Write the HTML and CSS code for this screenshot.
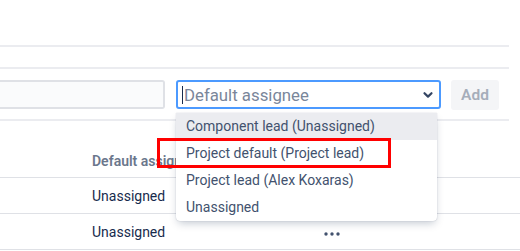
FILE: index.html
```html
<!DOCTYPE html>
<html>
<head>
<meta charset="utf-8">
<link rel="stylesheet" href="styles.css">
</head>
<body>
<div class="page">
  <div class="top-space"></div>
  <div class="divider"></div>
  <div class="gap20"></div>
  <div class="divider"></div>
  <div class="form-row">
    <div class="name-input"></div>
    <div class="select">
      <span class="caret"></span><span class="placeholder">Default assignee</span>
      <svg class="chevron" width="12" height="12" viewBox="0 0 12 12"><path d="M2.5 4.2 L6 7.6 L9.5 4.2" fill="none" stroke="#344563" stroke-width="2.2" stroke-linecap="round" stroke-linejoin="round"/></svg>
    </div>
    <div class="add-btn">Add</div>
  </div>
  <div class="divider form-divider"></div>
  <div class="table">
    <div class="row head"><div class="cell-name"></div><div class="cell-assignee">Default assignee</div></div>
    <div class="row"><div class="cell-name"></div><div class="cell-assignee">Unassigned</div><div class="cell-actions"></div></div>
    <div class="row"><div class="cell-name"></div><div class="cell-assignee">Unassigned</div><div class="cell-actions"><svg width="16" height="6" viewBox="0 0 16 6"><circle cx="2" cy="3" r="1.7" fill="#42526e"/><circle cx="8" cy="3" r="1.7" fill="#42526e"/><circle cx="14" cy="3" r="1.7" fill="#42526e"/></svg></div></div>
  </div>

  <div class="menu">
    <div class="item active">Component lead (Unassigned)</div>
    <div class="item">Project default (Project lead)</div>
    <div class="item">Project lead (Alex Koxaras)</div>
    <div class="item">Unassigned</div>
  </div>
  <div class="highlight"></div>
</div>
</body>
</html>
```
FILE: styles.css
```css
* { box-sizing: border-box; }
html, body { margin: 0; padding: 0; background: #fff; }
body {
  font-family: Roboto, "Noto Sans", sans-serif;
  font-size: 14px;
  color: #172b4d;
  width: 520px;
  height: 251px;
  overflow: hidden;
}
.page { position: relative; width: 520px; height: 251px; }
.top-space { height: 45px; }
.gap20 { height: 20px; }
.divider { height: 2px; width: 509px; background: #ebecf0; }
.form-row {
  display: flex;
  align-items: flex-start;
  margin-top: 11px;
  height: 30px;
}
.name-input {
  width: 165px;
  height: 29px;
  background: #fafbfc;
  border: 2px solid #dfe1e6;
  border-left: none;
  border-radius: 0 3px 3px 0;
}
.select {
  margin-left: 11px;
  width: 265px;
  height: 29px;
  border: 2px solid #4c9aff;
  border-radius: 3px;
  display: flex;
  align-items: center;
  padding-left: 4px;
  position: relative;
}
.caret { width: 1px; height: 18px; background: #172b4d; margin-right: 1px; }
.placeholder { color: #7a869a; font-size: 16.8px; line-height: 20px; }
.chevron { position: absolute; right: 5px; top: 7px; }
.add-btn {
  margin-left: 10px;
  width: 48px;
  height: 30px;
  background: #f4f5f7;
  border-radius: 3px;
  color: #a5adba;
  font-weight: 600;
  font-size: 15.5px;
  display: flex;
  align-items: center;
  justify-content: center;
}
.form-divider { margin-top: 9px; }
.row {
  display: flex;
  height: 36px;
  align-items: center;
  border-bottom: 1px solid #dfe1e6;
}
.row.head { height: 57px; align-items: flex-end; padding-bottom: 8px; }
.cell-name { width: 92px; flex: none; }
.cell-assignee { width: 232px; flex: none; white-space: nowrap; overflow: hidden; }
.head .cell-assignee { width: 84px; color: #6b778c; font-weight: 600; }
.cell-actions { display: flex; align-items: center; padding-top: 4px; }
.menu {
  position: absolute;
  left: 176px;
  top: 113px;
  width: 261px;
  background: #fff;
  border-radius: 0 0 4px 4px;
  box-shadow: 0 4px 8px -2px rgba(9,30,66,0.25), 0 0 1px rgba(9,30,66,0.31);
}
.item {
  height: 27px;
  line-height: 26px;
  padding-left: 10px;
  color: #42526e;
  white-space: nowrap;
}
.item.active { background: #ebecf0; }
.highlight {
  position: absolute;
  left: 157px;
  top: 138px;
  width: 234px;
  height: 30px;
  border: 3px solid #ff0000;
}
```
